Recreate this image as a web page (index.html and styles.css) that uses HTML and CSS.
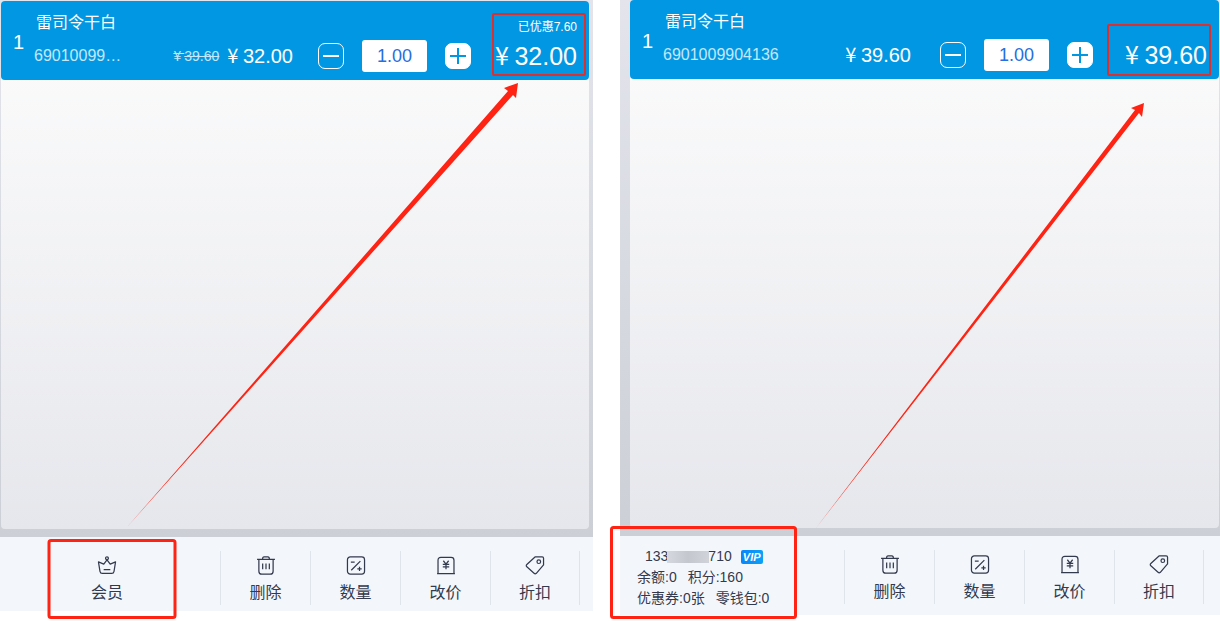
FILE: index.html
```html
<!DOCTYPE html>
<html lang="zh">
<head>
	<title>收银台</title>
	<meta charset="utf-8">
	<link rel="stylesheet" href="styles.css">
</head>
<body>

<!-- 图标 -->
<svg class="sprite" aria-hidden="true">
	<symbol id="crown" viewBox="0 0 20 20">
		<circle cx="10" cy="2.3" r="1.5"/>
		<path d="M10 4L6.6 8.6L1 6.2L2.6 16.2Q3 18.4 5 18.4H15Q17 18.4 17.4 16.2L19 6.2L13.4 8.6ZM6.5 14.4H13.5"/>
	</symbol>
	<symbol id="trash" viewBox="0 0 20 20">
		<path d="M0.6 3.6H19.4M6.4 3.4Q6.4 0.8 8 0.8H12Q13.6 0.8 13.6 3.4M2.5 3.6V16Q2.5 19.2 5.5 19.2H14.5Q17.5 19.2 17.5 16V3.6M6.5 8V14M10 8V14M13.5 8V14"/>
	</symbol>
	<symbol id="count" viewBox="0 0 20 20">
		<rect x="1" y="1" width="18" height="18" rx="3"/>
		<path d="M5 15L14.6 5.4M4.6 6.4H8.6M11.4 13.6H16M13.7 11.3V15.9"/>
	</symbol>
	<symbol id="price" viewBox="0 0 20 20">
		<path d="M0.6 18.5H19.4M1.6 18.5V4.5Q1.6 1.5 4.6 1.5H15.4Q18.4 1.5 18.4 4.5V18.5M7.2 5L10 8.6L12.8 5M6.6 8.8H13.4M6.6 11.4H13.4M10 8.6V14"/>
	</symbol>
	<symbol id="tag" viewBox="0 0 20 20">
		<path d="M10 1H17.6Q19 1 19 2.4V9.4L11.4 18.2Q10.2 19.4 9 18.2L1.4 11.4Q0.2 10.2 1.4 9Z"/>
		<circle cx="14" cy="6" r="1.9"/>
	</symbol>
</svg>

<main class="compare">

	<section class="panel">
		<div class="frame">
			<div class="card">
				<div class="item discounted">
					<span class="index">1</span>
					<div class="detail">
						<div class="name">雷司令干白</div>
						<div class="line">
							<span class="code">69010099…</span>
							<del><i>¥&nbsp;</i>39.60</del>
							<span class="unit"><i>¥&nbsp;</i>32.00</span>
							<div class="stepper">
								<button class="minus" type="button" aria-label="减少"></button>
								<input type="text" value="1.00" aria-label="数量">
								<button class="plus" type="button" aria-label="增加"></button>
							</div>
							<div class="total">
								<small>已优惠7.60</small>
								<b><i>¥&nbsp;</i>32.00</b>
							</div>
						</div>
					</div>
				</div>
			</div>
		</div>
		<div class="toolBar">
			<button class="member" type="button"><svg><use href="#crown"/></svg>会员</button>
			<button class="tool" type="button"><svg><use href="#trash"/></svg>删除</button>
			<button class="tool" type="button"><svg><use href="#count"/></svg>数量</button>
			<button class="tool" type="button"><svg><use href="#price"/></svg>改价</button>
			<button class="tool" type="button"><svg><use href="#tag"/></svg>折扣</button>
		</div>
	</section>

	<section class="panel after">
		<div class="frame">
			<div class="card">
				<div class="item">
					<span class="index">1</span>
					<div class="detail">
						<div class="name">雷司令干白</div>
						<div class="line">
							<span class="code">6901009904136</span>
							<span class="unit"><i>¥&nbsp;</i>39.60</span>
							<div class="stepper">
								<button class="minus" type="button" aria-label="减少"></button>
								<input type="text" value="1.00" aria-label="数量">
								<button class="plus" type="button" aria-label="增加"></button>
							</div>
							<div class="total">
								<b><i>¥&nbsp;</i>39.60</b>
							</div>
						</div>
					</div>
				</div>
			</div>
		</div>
		<div class="toolBar">
			<div class="memberInfo">
				<div class="phone">133<span class="mosaic"></span>710<span class="vip">VIP</span></div>
				<div class="assets"><span>余额:0</span><span>积分:160</span></div>
				<div class="assets"><span>优惠券:0张</span><span>零钱包:0</span></div>
			</div>
			<button class="tool" type="button"><svg><use href="#trash"/></svg>删除</button>
			<button class="tool" type="button"><svg><use href="#count"/></svg>数量</button>
			<button class="tool" type="button"><svg><use href="#price"/></svg>改价</button>
			<button class="tool" type="button"><svg><use href="#tag"/></svg>折扣</button>
		</div>
	</section>

	<!-- 标注 -->
	<svg class="marks" viewBox="0 0 1220 621" aria-hidden="true">
		<g class="thin">
			<rect x="493" y="14" width="92" height="61" rx="1"/>
			<rect x="1108" y="25" width="102" height="50" rx="1"/>
		</g>
		<g class="thick">
			<rect x="49" y="540.5" width="126" height="77" rx="2"/>
			<rect x="611.5" y="527.5" width="184" height="90" rx="2"/>
		</g>
		<path d="M128 526L508 91L504 88L518 83L516 98L513 95Z"/>
		<path d="M816 528L1135 110L1131 108L1144 103L1142 117L1139 113Z"/>
	</svg>
</main>

</body>
</html>
```
FILE: styles.css
```css
*{
	box-sizing: border-box;
}
body{
	margin: 0;
	background-color: #fff;
	color: #333a4d;
	font-family: "Liberation Sans", "Noto Sans CJK SC", sans-serif;
	font-size: 16px;
}
button,input{
	margin: 0;
	padding: 0;
	border: 0;
	font: inherit;
}
i,b{
	font-style: normal;
	font-weight: normal;
}
.sprite{
	display: none;
}

.compare{
	position: relative;
	display: flex;
	align-items: flex-start;
	gap: 27px;
	min-height: 100vh;
}
.panel{
	flex: 593;
	min-width: 0;
}
.after{
	flex: 600;
}

/* 商品区 */
.frame{
	padding: 1px 4px 8px 1px;
	background: linear-gradient(#e4e5ec, #cccfd6);
}
.after .frame{
	padding: 0 1px 8px 10px;
}
.card{
	min-height: 528px;
	border-radius: 4px;
	background: linear-gradient(#fdfdfd, #e6e7ec);
}
.item{
	display: flex;
	align-items: center;
	height: 79px;
	padding: 3px 12px 0;
	border-radius: 4px;
	background-color: #0297e2;
	color: #fff;
}
.index{
	width: 21px;
	font-size: 20px;
}
.detail{
	flex: 1;
	min-width: 0;
}
.name{
	padding: 4px 0 0 2px;
	line-height: 24px;
}
.line{
	display: flex;
	align-items: center;
	height: 42px;
}
.code{
	flex: 1;
	color: #c3e8fa;
}
.unit{
	font-size: 20px;
}
i{
	font-family: "Noto Sans CJK SC", sans-serif;
	line-height: 1;
}
.stepper{
	display: flex;
	align-items: center;
	gap: 18px;
	margin-left: 29px;
}
.stepper button{
	display: flex;
	align-items: center;
	justify-content: center;
	position: relative;
	width: 26px;
	height: 26px;
	border: 1px solid #fff;
	border-radius: 7px;
	background-color: #fff;
	color: #0297e2;
}
.stepper .minus{
	background: none;
	color: #fff;
}
.stepper button::before,.plus::after{
	content: "";
	width: 16px;
	height: 2px;
	background-color: currentColor;
}
.plus::after{
	position: absolute;
	transform: rotate(90deg);
}
.stepper input{
	width: 65px;
	height: 32px;
	border-radius: 3px;
	background-color: #fff;
	color: #2470e0;
	font-size: 18px;
	text-align: center;
}
.total{
	position: relative;
	width: 114px;
	text-align: right;
	font-size: 25px;
}
.total small{
	position: absolute;
	right: 0;
	bottom: 36px;
	font-size: 12px;
	line-height: 16px;
}
.discounted del{
	margin-right: 8px;
	color: #c3e8fa;
	font-size: 14px;
}
.discounted .stepper{
	margin-left: 25px;
}
.discounted .total{
	width: 106px;
}

/* 底部工具栏 */
.toolBar{
	display: flex;
	align-items: flex-start;
	height: 74px;
	padding: 14px 13px 0 0;
	background-color: #f3f7fc;
}
.after .toolBar{
	height: 79px;
	padding: 14px 16px 0 17px;
}
.toolBar button{
	display: flex;
	flex-direction: column;
	align-items: center;
	gap: 6px;
	height: 54px;
	padding-top: 5px;
	background: none;
	color: #333a4d;
	line-height: 24px;
}
.toolBar svg{
	width: 20px;
	height: 20px;
	fill: none;
	stroke: #333a4d;
	stroke-width: 1.3;
	stroke-linejoin: round;
}
.toolBar .member{
	flex: 1;
	padding-right: 6px;
}
.toolBar .tool{
	width: 90px;
	border-left: 1px solid #dfe3ea;
}
.toolBar .tool:last-child{
	border-right: 1px solid #dfe3ea;
}
.memberInfo{
	flex: 1;
	margin-top: -4px;
	font-size: 14px;
	line-height: 21px;
}
.assets{
	display: flex;
	gap: 11px;
}
.phone{
	display: flex;
	align-items: center;
	padding-left: 8px;
}
.mosaic{
	width: 42px;
	height: 12px;
	margin: 0 -1px;
	background: linear-gradient(90deg, #d5d8df, #c4c7ce 50%, #d0d3da);
}
.vip{
	width: 22px;
	margin-left: 9px;
	border-radius: 2px;
	background: linear-gradient(90deg, #0b84fa, #0ba2f7);
	color: #fff;
	font-size: 11px;
	font-style: italic;
	font-weight: bold;
	line-height: 14px;
	text-align: center;
}

/* 红色标注 */
.marks{
	position: absolute;
	top: 0;
	left: 0;
	width: 100%;
	pointer-events: none;
	fill: #ff2313;
}
.marks g{
	fill: none;
	stroke: #ff2313;
	stroke-width: 3;
}
.marks .thin{
	stroke: #dc3030;
	stroke-width: 2;
}
```
